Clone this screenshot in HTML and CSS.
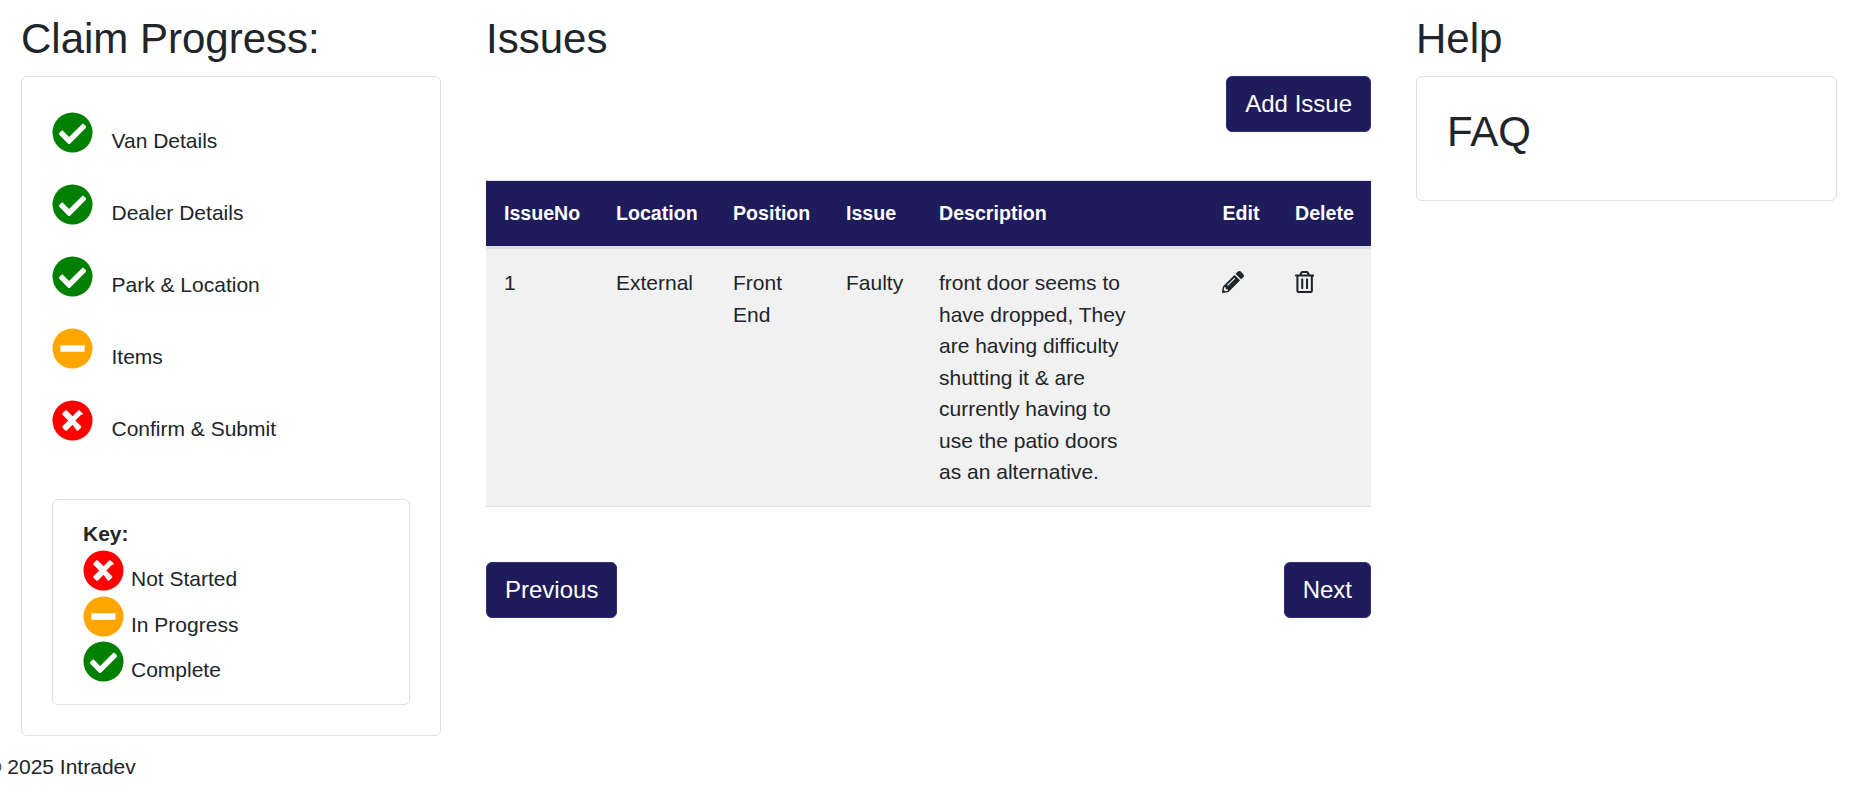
FILE: index.html
```html
<!DOCTYPE html>
<html lang="en">
<head>
<meta charset="utf-8">
<title>Issues</title>
<link rel="stylesheet" href="styles.css">
</head>
<body>
<main class="layout">
  <section>
    <h2 class="title">Claim Progress:</h2>
    <div class="card progress-card">
      <ul class="steps">
        <li class="step"><svg class="icon" viewBox="0 0 512 512"><use href="#i-check"/></svg><span class="step-label">Van Details</span></li>
        <li class="step"><svg class="icon" viewBox="0 0 512 512"><use href="#i-check"/></svg><span class="step-label">Dealer Details</span></li>
        <li class="step"><svg class="icon" viewBox="0 0 512 512"><use href="#i-check"/></svg><span class="step-label">Park &amp; Location</span></li>
        <li class="step"><svg class="icon" viewBox="0 0 512 512"><use href="#i-minus"/></svg><span class="step-label">Items</span></li>
        <li class="step"><svg class="icon" viewBox="0 0 512 512"><use href="#i-times"/></svg><span class="step-label">Confirm &amp; Submit</span></li>
      </ul>
      <div class="card key-card">
        <strong class="key-title">Key:</strong>
        <div class="key-row"><svg class="icon" viewBox="0 0 512 512"><use href="#i-times"/></svg><span class="key-label">Not Started</span></div>
        <div class="key-row"><svg class="icon" viewBox="0 0 512 512"><use href="#i-minus"/></svg><span class="key-label">In Progress</span></div>
        <div class="key-row"><svg class="icon" viewBox="0 0 512 512"><use href="#i-check"/></svg><span class="key-label">Complete</span></div>
      </div>
    </div>
  </section>

  <section>
    <h2 class="title">Issues</h2>
    <div class="add-row"><button class="btn">Add Issue</button></div>
    <table class="issues">
      <colgroup>
        <col class="c-no"><col class="c-loc"><col class="c-pos"><col class="c-iss"><col class="c-desc"><col class="c-edit"><col class="c-del">
      </colgroup>
      <thead>
        <tr><th>IssueNo</th><th>Location</th><th>Position</th><th>Issue</th><th>Description</th><th>Edit</th><th>Delete</th></tr>
      </thead>
      <tbody>
        <tr>
          <td>1</td><td>External</td><td>Front End</td><td>Faulty</td>
          <td><div class="desc-text">front door seems to have dropped, They are having difficulty shutting it &amp; are currently having to use the patio doors as an alternative.</div></td>
          <td><svg class="act act-edit" viewBox="0 0 512 512"><path fill="#212529" d="M497.9 142.1l-46.1 46.1c-4.7 4.7-12.3 4.7-17 0l-111-111c-4.7-4.7-4.7-12.3 0-17l46.1-46.1c18.7-18.7 49.1-18.7 67.9 0l60.1 60.1c18.8 18.7 18.8 49.1 0 67.9zM284.2 99.8L21.6 362.4.4 483.9c-2.9 16.4 11.4 30.6 27.8 27.8l121.5-21.3 262.6-262.6c4.7-4.7 4.7-12.3 0-17l-111-111c-4.8-4.7-12.4-4.7-17.1 0zM124.1 339.9c-5.5-5.5-5.5-14.3 0-19.8l154-154c5.5-5.5 14.3-5.5 19.8 0s5.5 14.3 0 19.8l-154 154c-5.5 5.5-14.3 5.5-19.8 0zM88 424h48v36.3l-64.5 11.3-31.1-31.1L51.7 376H88v48z"/></svg></td>
          <td><svg class="act" viewBox="0 0 448 512"><path fill="#212529" d="M268 416h24a12 12 0 0 0 12-12V188a12 12 0 0 0-12-12h-24a12 12 0 0 0-12 12v216a12 12 0 0 0 12 12zM432 80h-82.41l-34-56.7A48 48 0 0 0 274.41 0H173.59a48 48 0 0 0-41.16 23.3L98.41 80H16A16 16 0 0 0 0 96v16a16 16 0 0 0 16 16h16v336a48 48 0 0 0 48 48h288a48 48 0 0 0 48-48V128h16a16 16 0 0 0 16-16V96a16 16 0 0 0-16-16zM171.84 50.91A6 6 0 0 1 177 48h94a6 6 0 0 1 5.15 2.91L293.61 80H154.39zM368 464H80V128h288zm-212-48h24a12 12 0 0 0 12-12V188a12 12 0 0 0-12-12h-24a12 12 0 0 0-12 12v216a12 12 0 0 0 12 12z"/></svg></td>
        </tr>
      </tbody>
    </table>
    <div class="nav-row"><button class="btn">Previous</button><button class="btn">Next</button></div>
  </section>

  <section>
    <h2 class="title">Help</h2>
    <div class="card faq-card"><h3 class="faq">FAQ</h3></div>
  </section>
</main>
<footer class="footer">© 2025 Intradev</footer>

<svg class="defs" width="0" height="0">
  <defs>
    <g id="i-check"><circle cx="256" cy="256" r="250" fill="#008000"/><path fill="#fff" transform="translate(256 256) scale(1.06) translate(-256 -256)" d="M227.3 387.3l184-184c6.2-6.2 6.2-16.4 0-22.6l-22.6-22.6c-6.2-6.2-16.4-6.2-22.6 0L216 308.1l-70.1-70.1c-6.2-6.2-16.4-6.2-22.6 0l-22.6 22.6c-6.2 6.2-6.2 16.4 0 22.6l104 104c6.2 6.2 16.4 6.2 22.6 0z"/></g>
    <g id="i-minus"><circle cx="256" cy="256" r="250" fill="#ffa500"/><rect x="105" y="215" width="302" height="82" fill="#fff"/></g>
    <g id="i-times"><circle cx="256" cy="256" r="250" fill="#ff0000"/><path fill="#fff" d="M362.8 184.8l-71.2 71.2 71.2 71.2c5 5 5 13.1 0 18.1l-35.5 35.5c-5 5-13.1 5-18.1 0L256 309.7l-71.2 71.2c-5 5-13.1 5-18.1 0l-35.5-35.5c-5-5-5-13.1 0-18.1l71.2-71.2-71.2-71.2c-5-5-5-13.1 0-18.1l35.5-35.5c5-5 13.1-5 18.1 0l71.2 71.2 71.2-71.2c5-5 13.1-5 18.1 0l35.5 35.5c5 5 5 13.1 0 18.1z"/></g>
  </defs>
</svg>
</body>
</html>
```

FILE: styles.css
```css
* { box-sizing: border-box; }
html, body { margin: 0; padding: 0; }
body {
  font-family: "Liberation Sans", Arial, sans-serif;
  font-size: 21px;
  line-height: 31.5px;
  color: #212529;
  background: #fff;
  overflow: hidden;
  height: 793px;
}
.layout {
  display: grid;
  grid-template-columns: 420px 885px 421px;
  column-gap: 45px;
  padding: 0 27px 0 21px;
}
.title {
  margin: 14px 0 12px;
  font-size: 42px;
  line-height: 50px;
  font-weight: 400;
}
.card {
  border: 1px solid #dfdfdf;
  border-radius: 6px;
}
.progress-card { padding: 35px 30px 30px; }
.steps { list-style: none; margin: 0; padding: 0; }
.step {
  display: flex;
  height: 72px;
}
.icon { width: 41px; height: 41px; flex: none; }
.step-label { margin: 13px 0 0 18.5px; }
.key-card { margin-top: 27px; padding: 19px 30px 17.5px; }
.key-title { display: block; line-height: 30px; margin-bottom: 1px; }
.key-row { display: flex; height: 45.5px; }
.key-label { margin: 13px 0 0 7px; }
.btn {
  font-family: inherit;
  font-size: 24px;
  line-height: 36px;
  color: #fff;
  background: #1e1c5b;
  border: 1px solid #2e2e80;
  border-radius: 6px;
  padding: 9px 18px;
}
.add-row { display: flex; justify-content: flex-end; margin-bottom: 48px; }
.issues {
  width: 100%;
  border-collapse: separate;
  border-spacing: 0;
  table-layout: fixed;
}
.c-no { width: 112px; }
.c-loc { width: 117px; }
.c-pos { width: 113px; }
.c-iss { width: 93px; }
.c-desc { width: 283.5px; }
.c-edit { width: 72.5px; }
.c-del { width: 94px; }
.issues th {
  background: #1e1c5b;
  color: #fff;
  text-align: left;
  font-size: 19.6px;
  padding: 17px 0 16.5px 18px;
  border-top: 1px solid #dee2e6;
  border-bottom: 3px solid #dee2e6;
}
.issues td {
  background: #f1f1f1;
  vertical-align: top;
  padding: 18px;
  border-bottom: 1px solid #dfdfe6;
}
.desc-text { width: 195px; }
.act { display: block; height: 22px; margin-top: 4px; }
.act-edit { margin-left: -1px; }
.nav-row { display: flex; justify-content: space-between; margin-top: 55px; }
.faq-card { padding: 30px 30px 29px; height: 124.5px; }
.faq { margin: 0; font-size: 42px; line-height: 50px; font-weight: 400; }
.footer { margin: 15px 0 0 -14px; }
.defs { position: absolute; }
```
